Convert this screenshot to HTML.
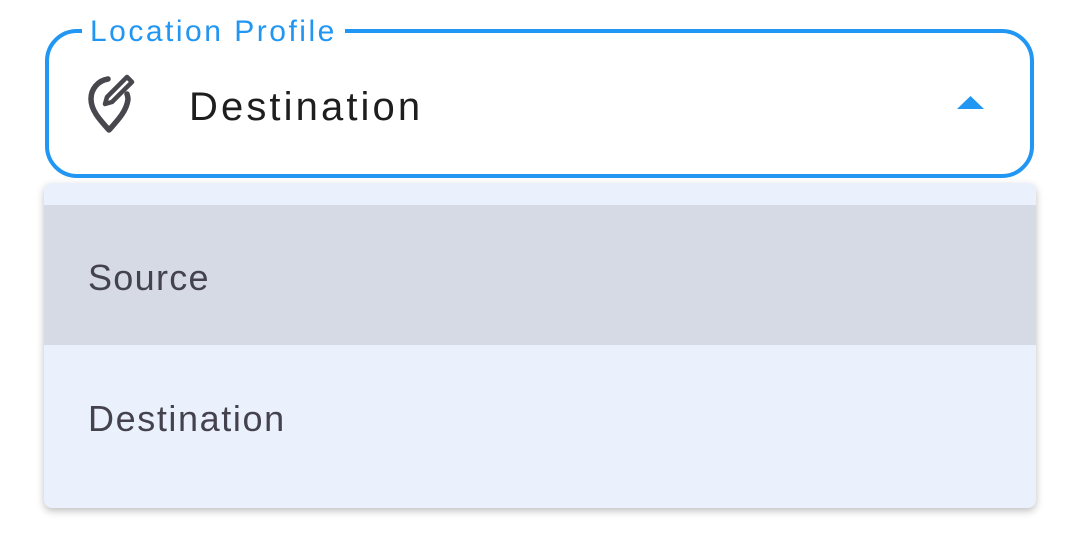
<!DOCTYPE html>
<html><head><style>
body{margin:0;width:1080px;height:540px;background:#fff;position:relative;overflow:hidden;font-family:"Liberation Sans",Roboto,sans-serif}
.box{position:absolute;left:45px;top:29px;width:981px;height:141px;border:4.5px solid #2196f3;border-radius:32px}
.lab{position:absolute;left:82px;top:14px;padding:0 8px;background:#fff;color:#2196f3;font-size:30px;letter-spacing:2.5px;line-height:36px}
.val{position:absolute;left:189px;top:84px;font-size:40px;color:#1e1e1e;letter-spacing:3.1px;line-height:46px}
.menu{position:absolute;left:44px;top:183px;width:992px;height:325px;background:#eaf0fc;border-radius:8px;box-shadow:0 3px 8px rgba(0,0,0,0.25);overflow:hidden}
.sel{position:absolute;left:0;top:22px;width:992px;height:140px;background:#d5dae4}
.it{position:absolute;left:44px;font-size:36px;color:#44434d;line-height:40px}
</style></head><body>
<div class="box"></div>
<div class="lab">Location Profile</div>
<svg style="position:absolute;left:85px;top:72px" width="54" height="62" viewBox="0 0 54 62">
<path d="M23 7 A20 20 0 0 0 6 27 C6 38 14 47 24 58 C34 47 42 38 43 27 A18 18 0 0 0 42 22" fill="none" stroke="#48474d" stroke-width="5.5" stroke-linejoin="round" stroke-linecap="round"/>
<path d="M20 32 L22 25 L42 5 L47 10 L27 30 Z" fill="none" stroke="#48474d" stroke-width="4.5" stroke-linejoin="round"/>
</svg>
<div class="val">Destination</div>
<svg style="position:absolute;left:956px;top:95px" width="29" height="15"><polygon points="1,14 14.5,1 28,14" fill="#2196f3"/></svg>
<div class="menu">
<div class="sel"></div>
<div class="it" style="top:75px;letter-spacing:1.3px">Source</div>
<div class="it" style="top:216px;letter-spacing:1.6px">Destination</div>
</div>
</body></html>
